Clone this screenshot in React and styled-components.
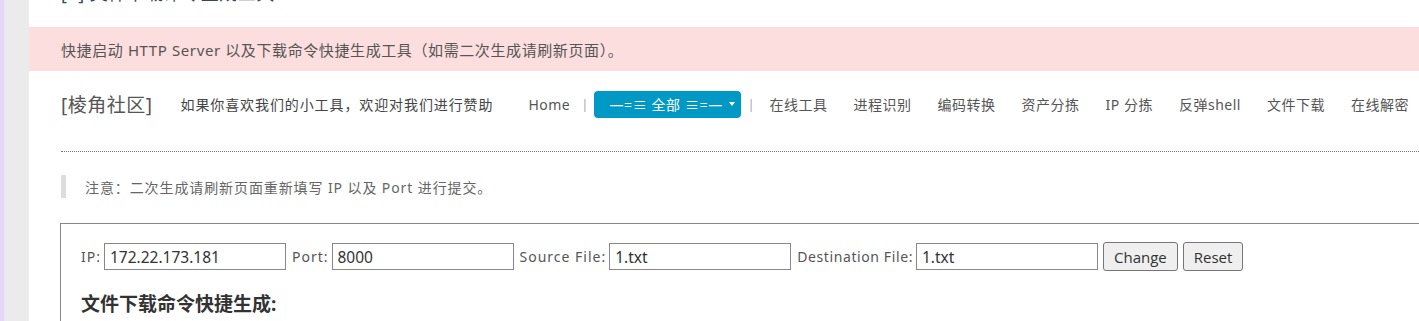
import React from 'react';
import styled, { createGlobalStyle } from 'styled-components';

const GlobalStyle = createGlobalStyle`
  html, body {
    margin: 0;
    padding: 0;
    background: #ffffff;
    overflow: hidden;
  }
  body {
    font-family: 'Noto Sans', 'Noto Sans CJK SC', sans-serif;
    color: #555;
  }
`;

const NAV_ITEMS = ['在线工具', '进程识别', '编码转换', '资产分拣', 'IP 分拣', '反弹shell', '文件下载', '在线解密'];

function App() {
  return (
    <>
      <GlobalStyle />
      <Page>
        <Gutter />
        <Main>
          <CutTitle>[+] 文件下载命令生成工具</CutTitle>
          <Alert>快捷启动 HTTP Server 以及下载命令快捷生成工具（如需二次生成请刷新页面）。</Alert>

          <Header>
            <Brand>[棱角社区]</Brand>
            <Sponsor>如果你喜欢我们的小工具，欢迎对我们进行赞助</Sponsor>
            <Nav>
              <NavLink $first>Home</NavLink>
              <Sep $left="11px" $right="6px">|</Sep>
              <Dropdown>
                <span>—=≡ 全部 ≡=—</span>
                <Caret />
              </Dropdown>
              <Sep $left="6px" $right="2px">|</Sep>
              {NAV_ITEMS.map((item) => (
                <NavLink key={item}>{item}</NavLink>
              ))}
            </Nav>
          </Header>

          <Divider />

          <Note>注意：二次生成请刷新页面重新填写 IP 以及 Port 进行提交。</Note>

          <Panel>
            <FormRow>
              <Label>IP:</Label>
              <Field defaultValue="172.22.173.181" />
              <Label>Port:</Label>
              <Field defaultValue="8000" />
              <Label>Source File:</Label>
              <Field defaultValue="1.txt" />
              <Label $tight>Destination File:</Label>
              <Field defaultValue="1.txt" />
              <Btn>Change</Btn>
              <Btn>Reset</Btn>
            </FormRow>
            <SectionTitle>文件下载命令快捷生成:</SectionTitle>
          </Panel>
        </Main>
      </Page>
    </>
  );
}

export default App;

const Page = styled.div`
  display: flex;
  width: 1419px;
  height: 321px;
  overflow: hidden;
`;

const Gutter = styled.div`
  flex: none;
  width: 25px;
  background: #ebebeb;
  border-left: 4px solid #e4d8f8;
  box-shadow: inset 1px 0 0 #ece4fa;
`;

const Main = styled.div`
  flex: none;
  width: 1500px;
`;

const CutTitle = styled.div`
  margin: -17px 0 0 32px;
  height: 20px;
  font-size: 18px;
  line-height: 20px;
  letter-spacing: 0.5px;
  color: #34495e;
`;

const Alert = styled.div`
  margin-top: 24px;
  height: 44px;
  display: flex;
  align-items: center;
  padding-left: 32px;
  background: #fcdede;
  font-size: 15px;
  letter-spacing: 0.6px;
  color: #555;
`;

const Header = styled.div`
  display: flex;
  align-items: center;
  height: 32px;
  margin-top: 17px;
  padding-left: 32px;
`;

const Brand = styled.div`
  font-size: 19px;
  color: #555;
  letter-spacing: 0.5px;
`;

const Sponsor = styled.div`
  margin-left: 28px;
  font-size: 14px;
  letter-spacing: 0.9px;
  color: #444;
`;

const Nav = styled.div`
  display: flex;
  align-items: center;
  margin-left: 35px;
`;

const NavLink = styled.span`
  font-size: 14px;
  letter-spacing: 0.5px;
  color: #555;
  padding: 0 ${(p) => (p.$first ? '0' : '13px')};
  white-space: nowrap;
`;

const Sep = styled.span`
  font-size: 13px;
  color: #aaa;
  margin: 0 ${(p) => p.$right} 0 ${(p) => p.$left};
`;

const Dropdown = styled.div`
  display: flex;
  align-items: center;
  justify-content: space-between;
  width: 147px;
  height: 27px;
  box-sizing: border-box;
  padding: 0 6px 0 15px;
  background: #0099c6;
  border-radius: 4px;
  color: #fff;
  font-size: 14px;
  letter-spacing: 0.6px;
  white-space: nowrap;
`;

const Caret = styled.span`
  width: 0;
  height: 0;
  border-left: 3.5px solid transparent;
  border-right: 3.5px solid transparent;
  border-top: 4px solid #fff;
`;

const Divider = styled.div`
  margin: 31px 0 0 32px;
  border-top: 1px dotted #777;
`;

const Note = styled.div`
  margin: 23px 0 0 32px;
  height: 23px;
  display: flex;
  align-items: center;
  border-left: 5px solid #ddd;
  padding-left: 19px;
  font-size: 14px;
  letter-spacing: 0.9px;
  color: #666;
`;

const Panel = styled.div`
  margin: 25px 0 0 31px;
  border: 1px solid #888;
  padding: 18px 19px 0 20px;
  height: 200px;
`;

const FormRow = styled.div`
  display: flex;
  align-items: center;
  height: 29px;
`;

const Label = styled.span`
  font-size: 14px;
  letter-spacing: ${(p) => (p.$tight ? '0.6px' : '1px')};
  color: #555;
  margin-right: 3px;
  &:not(:first-child) {
    margin-left: 6px;
  }
`;

const Field = styled.input`
  width: 182px;
  height: 27px;
  box-sizing: border-box;
  border: 1px solid #888;
  padding: 0 5px;
  font-family: 'Noto Sans', sans-serif;
  font-size: 15.5px;
  color: #333;
  outline: none;
`;

const Btn = styled.button`
  height: 29px;
  margin-left: 5px;
  padding: 0 10px;
  background: #efefef;
  border: 1px solid #767676;
  border-radius: 3px;
  font-family: 'Open Sans', sans-serif;
  font-size: 15px;
  color: #333;
`;

const SectionTitle = styled.h3`
  margin: 18px 0 0;
  font-size: 19px;
  font-weight: bold;
  color: #333;
`;
